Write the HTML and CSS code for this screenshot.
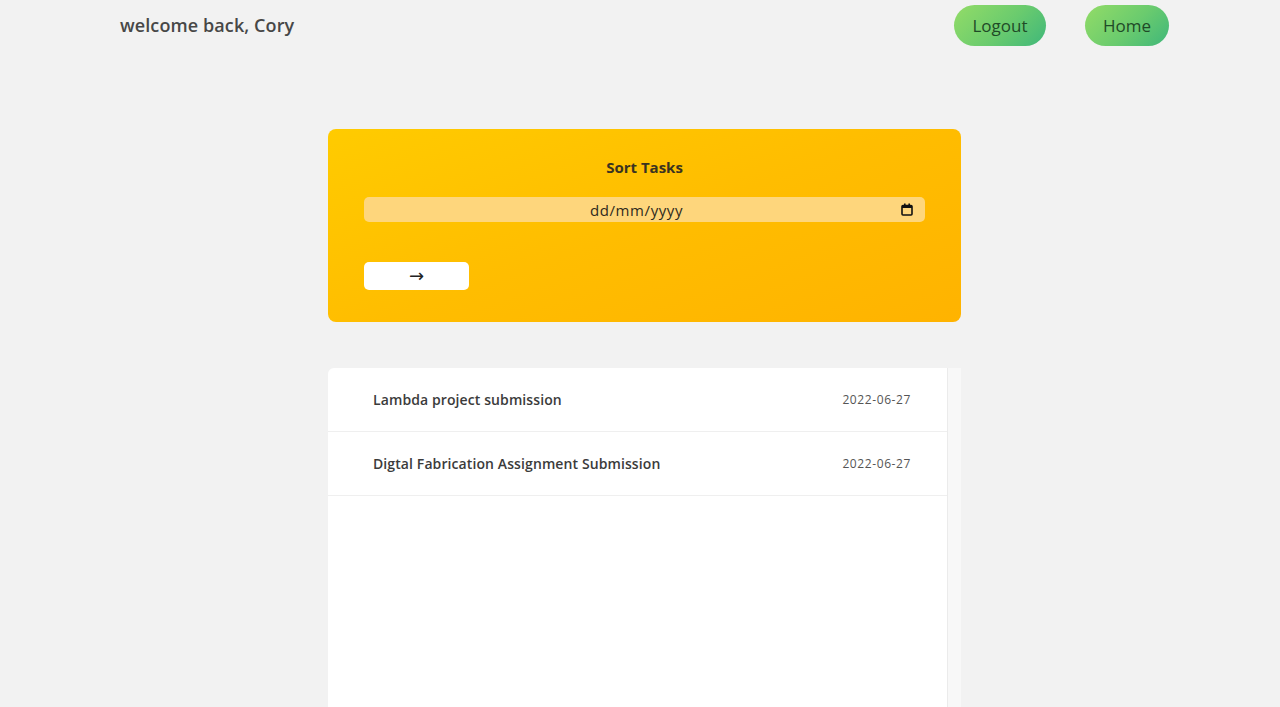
FILE: index.html
```html
<!DOCTYPE html>
<html lang="en">
<head>
<meta charset="utf-8">
<title>Tasks</title>
<link rel="stylesheet" href="styles.css">
</head>
<body>
<header class="topbar">
  <h1 class="welcome">welcome back, Cory</h1>
  <nav class="nav">
    <button class="pill">Logout</button>
    <button class="pill">Home</button>
  </nav>
</header>
<main class="main">
  <section class="sort-card">
    <h2 class="sort-title">Sort Tasks</h2>
    <div class="date-field">
      <span class="date-text">dd/mm/yyyy</span>
      <svg class="cal" width="12" height="13" viewBox="0 0 12 13"><rect x="1" y="2.5" width="10" height="9.5" rx="1" fill="none" stroke="#111" stroke-width="1.6"/><rect x="1" y="2.5" width="10" height="2.5" fill="#111"/><rect x="3" y="0.5" width="1.6" height="3" fill="#111"/><rect x="7.4" y="0.5" width="1.6" height="3" fill="#111"/></svg>
    </div>
    <button class="go">→</button>
  </section>
  <section class="list">
    <div class="rows">
      <div class="row"><span class="task">Lambda project submission</span><span class="date">2022-06-27</span></div>
      <div class="row"><span class="task">Digtal Fabrication Assignment Submission</span><span class="date">2022-06-27</span></div>
    </div>
    <div class="track"></div>
  </section>
</main>
</body>
</html>
```
FILE: styles.css
```css
* { box-sizing: border-box; }
html, body { margin: 0; padding: 0; }
body {
  background: #f2f2f2;
  font-family: "Open Sans", "Liberation Sans", sans-serif;
  color: #444;
  overflow: hidden;
  height: 707px;
}
.topbar {
  display: flex;
  justify-content: space-between;
  align-items: flex-start;
  padding: 5px 111px 0 120px;
  height: 51px;
}
.welcome {
  margin: 0;
  font-size: 18px;
  font-weight: 600;
  color: #474747;
  line-height: 20px;
  padding-top: 10px;
  letter-spacing: 0.1px;
}
.nav { display: flex; gap: 39px; }
.pill {
  border: none;
  border-radius: 21px;
  height: 41px;
  background: linear-gradient(135deg, #93dc67 0%, #6acb6e 55%, #3fb77a 100%);
  color: #1f4a27;
  font-family: inherit;
  font-size: 17px;
  padding: 0;
}
.pill:first-child { width: 92px; }
.pill:last-child { width: 84px; }
.main {
  margin-left: 328px;
  width: 633px;
  padding-top: 78px;
}
.sort-card {
  height: 193px;
  border-radius: 8px;
  background: linear-gradient(160deg, #ffcb00 0%, #ffbd00 50%, #ffb300 100%);
  padding: 28px 36px 0;
  display: flex;
  flex-direction: column;
}
.sort-title {
  margin: 0;
  text-align: center;
  font-size: 15px;
  font-weight: 700;
  color: #3a3320;
  line-height: 20px;
}
.date-field {
  margin-top: 20px;
  height: 25px;
  border-radius: 5px;
  background: #fed67c;
  position: relative;
  display: flex;
  align-items: center;
  justify-content: center;
}
.date-text { font-size: 15px; color: #2f2a1d; letter-spacing: 0.6px; margin-left: -16px; }
.cal { position: absolute; right: 12px; top: 6px; }
.go {
  margin-top: 40px;
  width: 105px;
  height: 28px;
  border: none;
  border-radius: 5px;
  background: #fff;
  font-family: "DejaVu Sans", sans-serif;
  font-size: 18px;
  color: #222;
  padding: 0;
  line-height: 28px;
}
.list {
  margin-top: 46px;
  height: 340px;
  display: flex;
}
.rows {
  flex: 1;
  background: #fff;
  border-top-left-radius: 6px;
}
.track {
  width: 14px;
  background: #f8f8f8;
  border-left: 1px solid #ebebeb;
}
.row {
  height: 64px;
  border-bottom: 1px solid #efefef;
  display: flex;
  align-items: center;
  justify-content: space-between;
  padding: 0 36px 0 45px;
}
.task { font-size: 14px; font-weight: 600; color: #3b3b3b; letter-spacing: 0.1px; }
.date { font-size: 12px; color: #555; letter-spacing: 0.6px; }
```
